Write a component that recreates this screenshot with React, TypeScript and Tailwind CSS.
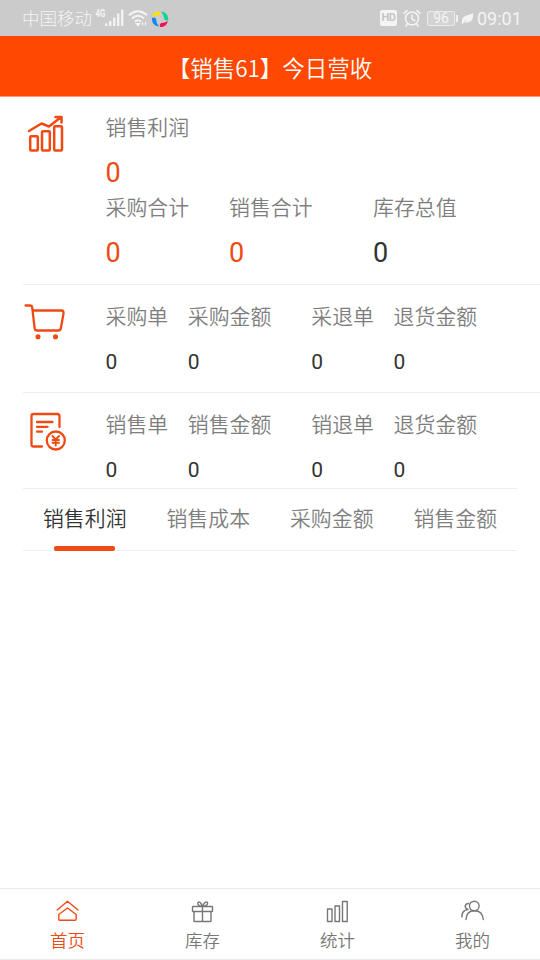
import React from "react";

const Signal = () => (
  <svg className="h-[20px] w-[30px]" viewBox="0 0 30 20" fill="none">
    <text x="0.500" y="9" fontSize="10.500" fontWeight="700" fill="#f4f4f4" fontFamily="Roboto" textLength="10" lengthAdjust="spacingAndGlyphs">4G</text>
    <path d="M11.3 18v-2.500M15.2 18v-5M19.2 18v-8.500M23.200 18V5.500M27.200 18V1.500" stroke="#f2f2f2" strokeWidth="2.400" />
  </svg>
);

const Wifi = () => (
  <svg className="h-[18px] w-[20px]" viewBox="0 0 20 18" fill="none" stroke="#f4f4f4" strokeWidth="1.9">
    <path d="M1 6.200Q10-1.500 19 6.200M4 9.500Q10 4 16 9.500M7 12.500Q10 10 13 12.500" />
    <path d="M8.300 14.500h3.400L10 16.500zM14.500 13v3.500M17.500 13v3.500" strokeWidth="1.200" fill="#f4f4f4" />
  </svg>
);

const Pinwheel = () => (
  <svg className="h-[18px] w-[18px]" viewBox="0 0 18 18">
    <path d="M1 7Q2 1 9 1.500Q10 3 8.500 5Q5 5 1 7Z" fill="#ffe000" />
    <path d="M10 1.500Q17 2 17.500 10Q15 11 13.500 9.500Q13 5 10 1.500Z" fill="#10d291" />
    <path d="M17 11Q15 17.500 9 17Q8 14.500 10 13Q14 13 17 11Z" fill="#f50c59" />
    <path d="M.8 8Q3 7 5 8.500Q5 13 8 16.500Q1 16 .8 8Z" fill="#1687ee" />
  </svg>
);

const StatusBar = () => (
  <div className="flex h-9 items-center bg-[#cbcbcb] text-[#f4f4f4]">
    <span className="mt-[2px] ml-[22px] w-[73px] text-[17.500px] leading-6 font-light">中国移动</span>
    <div className="-mt-[1px]"><Signal /></div>
    <div className="ml-[3px]"><Wifi /></div>
    <div className="ml-[3px] mt-[1px]"><Pinwheel /></div>
    <div className="ml-auto mr-[18px] flex items-center">
      <span className="flex h-4 w-[17px] items-center justify-center rounded-[2px] bg-[#f4f4f4] text-[11px] font-bold tracking-[-0.5px] text-[#c4c4c4]">HD</span>
      <svg className="ml-[6px] h-[18px] w-[18px]" viewBox="0 0 18 18" fill="none" stroke="#f4f4f4" strokeWidth="1.600" strokeLinecap="round">
        <circle cx="9" cy="9.500" r="6.500" />
        <path d="M9 6v4l2.500 1.500M1.200 4.200 4 1.500M16.800 4.200 14 1.500M4 15.500 3 17M14 15.500l1 1.500" />
      </svg>
      <span className="ml-[6px] flex h-[15px] w-[28px] items-center justify-center rounded-[2px] border border-[#eaeaea] bg-[#d3d3d3] text-[14px] leading-none">96</span>
      <span className="ml-[1px] h-[7px] w-[2px] bg-[#f0f0f0]" />
      <svg className="ml-[3px] h-[13px] w-[13px]" viewBox="0 0 13 13">
        <path d="M1 12Q0 6 4 4Q8 3 12 1Q13 10 6 10.500Q4 10.500 3 10L1.500 12.500Z" fill="#f4f4f4" />
        <path d="M3 10 6 7.500" stroke="#cbcbcb" strokeWidth=".5" />
      </svg>
      <span className="mt-[2px] ml-[3px] w-[45px] text-[18px] leading-6">09:01</span>
    </div>
  </div>
);

const GrowthIcon = () => (
  <svg className="h-[40px] w-[44px]" viewBox="0 0 44 40" fill="none" stroke="#f04a14" strokeWidth="2.500" strokeLinecap="round" strokeLinejoin="round">
    <rect x="7.200" y="24.200" width="7.600" height="14.300" rx="1" />
    <rect x="19" y="19.200" width="7.800" height="19.300" rx="1" />
    <rect x="31.200" y="14.200" width="7.800" height="24.300" rx="1" />
    <path d="M6 19 18.500 11.500 26 14.500 37.500 5.500M32.500 5H38.500V10.500" />
  </svg>
);

const CartIcon = () => (
  <svg className="h-[40px] w-[44px]" viewBox="0 0 44 40" fill="none" stroke="#f04a14" strokeWidth="2.300" strokeLinecap="round" strokeLinejoin="round">
    <path d="M2.500 4.500H7Q9 4.500 9.200 6.500L11.700 27.500Q12 29.500 14 29.500H35Q37.500 29.500 37.800 27.500L40.500 12.500Q40.800 9.500 38.500 9.500H10" />
    <circle cx="15" cy="35.800" r="1.800" fill="#f04a14" strokeWidth="1.500" />
    <circle cx="32.500" cy="35.800" r="1.800" fill="#f04a14" strokeWidth="1.500" />
  </svg>
);

const BillIcon = () => (
  <svg className="mt-[2px] h-[40px] w-[44px]" viewBox="0 0 44 40" fill="none" stroke="#f04a14" strokeWidth="2.300" strokeLinecap="round" strokeLinejoin="round">
    <path d="M36.500 16V5Q36.500 3 34.500 3H10.500Q8.500 3 8.500 5V33.500Q8.500 35.500 10.500 35.500H19M14 11H29.500M14 15.800H24.500M14 20.700H19" />
    <circle cx="32.800" cy="29.500" r="9" />
    <path d="M29.500 25 32.700 28.500 36 25M29.500 29H36M29.500 31.700H36M32.700 28.500V34.500" strokeWidth="1.900" />
  </svg>
);

interface LabelProps {
  label: string;
  width: string;
}

const Label = ({ label, width }: LabelProps) => (
  <div className={"whitespace-nowrap text-[#7e7e7e] " + width}>{label}</div>
);

const OrderSection = ({ icon, labels }: { icon: React.ReactNode; labels: string[] }) => {
  const widths = ["w-[82.300px]", "w-[123.500px]", "w-[82.300px]", "w-[82.300px]"];
  return (
    <div className="flex">
      <div className="w-[82.500px] shrink-0 pt-[16px]">{icon}</div>
      <div className="pt-[17px]">
        <div className="flex h-[30px] leading-[30px]">
          {labels.map((label, i) => <Label key={i} label={label} width={widths[i]} />)}
        </div>
        <div className="mt-[16px] flex h-[28px] text-[21px] leading-[28px] text-[#333]">
          {labels.map((_, i) => <span key={i} className={widths[i]}>0</span>)}
        </div>
      </div>
    </div>
  );
};

const navStroke = { fill: "none", stroke: "currentColor", strokeWidth: 1.4, strokeLinecap: "round", strokeLinejoin: "round" } as const;

const navItems = [
  {
    label: "首页",
    icon: <path d="M1.200 10 11.500 1.200 22 10M2.800 20V14.500L11.500 8 20.200 14.500V19Q20.200 20.200 19 20.200H4Q2.800 20.200 2.800 19Z" />,
  },
  {
    label: "库存",
    icon: <path d="M2 6.500H21Q21.500 6.500 21.500 7V11Q21.500 11.500 21 11.500H2Q1.500 11.500 1.500 11V7Q1.500 6.500 2 6.500ZM3 11.500V21Q3 21.500 3.500 21.500H19.500Q20 21.500 20 21V11.500M11.500 6.500V21.500M11.500 6.500Q5.500 5.500 7 2.500Q9 .5 11.500 6.500Q14 .5 16.500 2.500Q17.500 5.500 11.500 6.500" />,
  },
  {
    label: "统计",
    icon: <path d="M1.500 9H6V21.500H1.500ZM9 6H13.500V21.500H9ZM16.500 1.500H21.200V21.500H16.500Z" />,
  },
  {
    label: "我的",
    icon: <><circle cx="13.300" cy="6" r="4.800" /><path d="M5 19.500Q5.500 10.800 13.500 10.800Q21.500 10.800 22.300 19.500M.8 17Q1 10 7 9.500Q4 8.500 4.200 6Q4.800 3.500 7.500 3.500" /></>,
  },
];

export default function App() {
  return (
    <div className="flex h-[960px] w-[540px] flex-col overflow-hidden bg-white font-[Roboto,'Noto_Sans_CJK_SC',sans-serif] text-[20.900px]">
      <StatusBar />
      <header className="flex h-[61px] items-center justify-center border-b border-[#ff9a78] bg-[#ff4801] pt-[5px] text-[22.500px] text-white">
        <span className="whitespace-nowrap font-[350]">【销售<span className="font-['Noto_Sans_CJK_SC',sans-serif]">61</span>】今日营收</span>
      </header>

      <main className="ml-[23px] flex-1 font-[350]">
        <section className="flex h-[188px] border-b border-[#eeeeee]">
          <div className="w-[82.500px] shrink-0 pt-[15px]"><GrowthIcon /></div>
          <div className="pt-[16px]">
            <div className="h-[30px] leading-[30px]"><Label label="销售利润" width="w-[123.500px]" /></div>
            <div className="mt-[14px] h-[32px] text-[27px] leading-[32px] font-normal text-[#f04a14]">0</div>
            <div className="mt-[4px] flex h-[30px] leading-[30px]">
              <Label label="采购合计" width="w-[123.500px]" />
              <Label label="销售合计" width="w-[144px]" />
              <Label label="库存总值" width="w-[144px]" />
            </div>
            <div className="mt-[14px] flex h-[32px] text-[27px] leading-[32px] font-normal text-[#f04a14]">
              <span className="w-[123.500px]">0</span>
              <span className="w-[144px]">0</span>
              <span className="w-[144px] text-[#333]">0</span>
            </div>
          </div>
        </section>
        <section className="h-[108px] border-b border-[#eeeeee] [&_span]:font-normal">
          <OrderSection icon={<CartIcon />} labels={["采购单", "采购金额", "采退单", "退货金额"]} />
        </section>
        <section className="h-[96px] w-[494px] border-b border-[#eeeeee] [&_span]:font-normal">
          <OrderSection icon={<BillIcon />} labels={["销售单", "销售金额", "销退单", "退货金额"]} />
        </section>
        <div className="flex h-[62px] w-[494px] border-b border-[#eeeeee] leading-[60px]">
          {["销售利润", "销售成本", "采购金额", "销售金额"].map((tab, i) => (
            <div key={tab} className={"relative flex-1 text-center " + (i === 0 ? "text-[#333]" : "text-[#7e7e7e]")}>
              {tab}
              {i === 0 && <i className="absolute -bottom-[1px] left-[31px] h-[5px] w-[61px] rounded-[2px] bg-[#f04a14]" />}
            </div>
          ))}
        </div>
      </main>

      <nav className="flex h-[72px] shrink-0 border-y border-[#eaeaea] font-[350]">
        {navItems.map((item, i) => (
          <div key={item.label} className={"flex flex-1 flex-col items-center pt-[11px] " + (i === 0 ? "text-[#f04a14]" : "text-[#777]")}>
            <svg className="h-[23px] w-[23px]" viewBox="0 0 23 23" {...navStroke}>{item.icon}</svg>
            <span className="mt-[6px] text-[17.500px] leading-6">{item.label}</span>
          </div>
        ))}
      </nav>
    </div>
  );
}
